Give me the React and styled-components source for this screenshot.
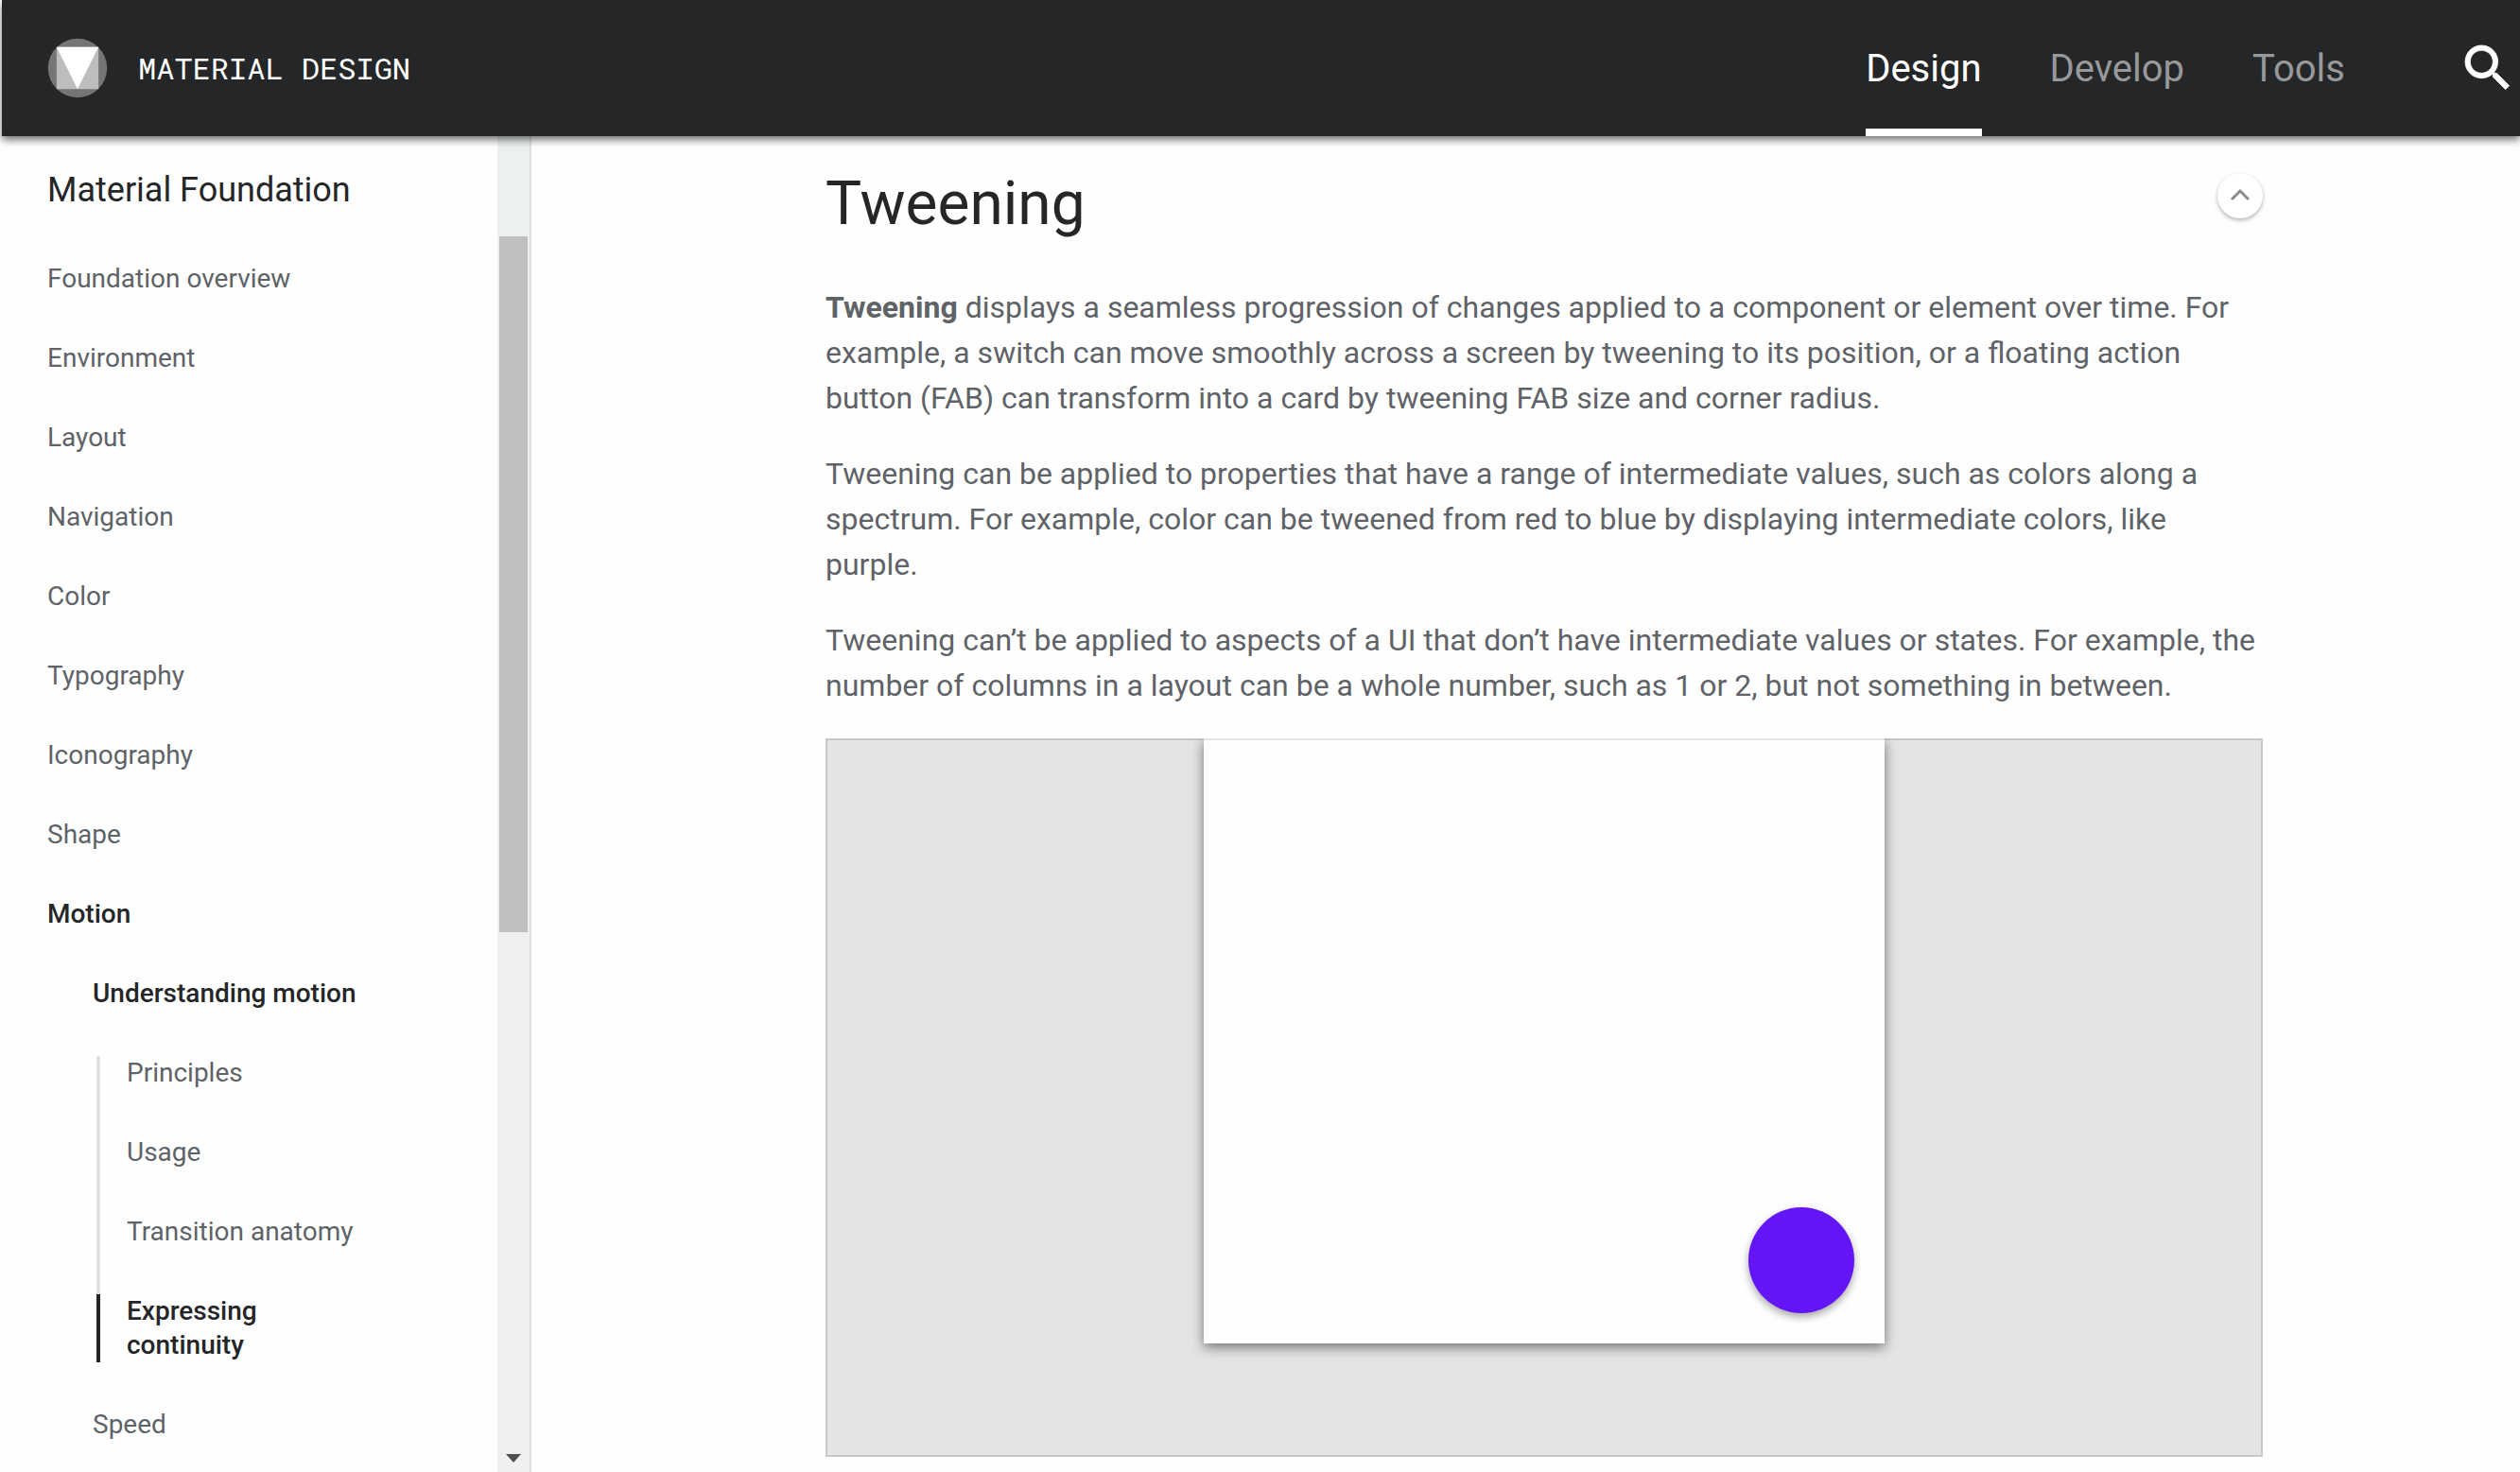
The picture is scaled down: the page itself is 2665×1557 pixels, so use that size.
import React from "react";
import styled, { createGlobalStyle } from "styled-components";

const GlobalStyle = createGlobalStyle`
  *, *::before, *::after { box-sizing: border-box; }
  body {
    margin: 0;
    background: #fefefe;
    color: #5f6368;
    font-family: Roboto, "Liberation Sans", sans-serif;
  }
  a { color: inherit; text-decoration: none; }
  ul { list-style: none; margin: 0; padding: 0; }
  p, h1, h2, figure { margin: 0; }
`;

const Page = styled.div`
  display: flex;
  flex-direction: column;
  height: 100vh;
  overflow: hidden;
`;

const Header = styled.header`
  display: flex;
  flex: none;
  align-items: stretch;
  height: 144px;
  margin-left: 2px;
  padding: 0 2px 0 48px;
  background: #242628;
  box-shadow: 0 4px 8px rgba(0, 0, 0, 0.55);
  z-index: 1;
`;

const Brand = styled.a`
  display: flex;
  align-items: center;
  gap: 32px;
  margin-right: auto;
  color: #fff;
  font: 400 32px/40px "Roboto Mono", "DejaVu Sans Mono", monospace;
`;

const Logo = styled.svg`
  width: 64px;
  height: 64px;
`;

const TopNav = styled.nav`
  display: flex;
  gap: 72px;
  margin-right: 119px;
`;

const TopLink = styled.a`
  display: flex;
  align-items: center;
  padding-top: 10px;
  border-bottom: 8px solid ${(p) => (p.$active ? "#fff" : "transparent")};
  color: ${(p) => (p.$active ? "#fff" : "#98999b")};
  font-size: 40px;
  line-height: 48px;
`;

const SearchButton = styled.button`
  align-self: center;
  width: 64px;
  height: 64px;
  padding: 0;
  border: 0;
  background: none;
  color: #fff;
  svg { display: block; width: 100%; height: 100%; }
`;

const Body = styled.div`
  display: flex;
  flex: 1;
  min-height: 0;
`;

const Sidebar = styled.aside`
  display: flex;
  flex: none;
  width: 562px;
  border-right: 2px solid #dfdfdf;
`;

const SideNav = styled.nav`
  flex: 1;
  padding: 33px 0 0 50px;
  overflow: hidden;
  font-size: 28px;
  line-height: 36px;
`;

const SideTitle = styled.h2`
  margin-bottom: 52px;
  color: #242628;
  font-size: 36px;
  font-weight: 400;
  line-height: 48px;
`;

const SideItem = styled.li`
  margin-bottom: 48px;
`;

const SideLink = styled.a`
  display: block;
  color: ${(p) => (p.$active ? "#242628" : "inherit")};
  font-weight: ${(p) => (p.$active ? 500 : 400)};
`;

const SubList = styled.ul`
  margin: 48px 0 0 48px;
`;

const LeafList = styled.ul`
  margin: 48px 0 0 4px;
`;

const LeafItem = styled.li`
  width: 280px;
  padding: 0 0 ${(p) => (p.$active ? 0 : 48)}px 28px;
  border-left: 4px solid ${(p) => (p.$active ? "#242628" : "#e2e2e2")};
`;

const ScrollTrack = styled.div`
  display: flex;
  flex-direction: column;
  align-items: center;
  width: 34px;
  padding: 106px 0 10px;
  background: linear-gradient(#ecf0f1 106px, #f0eff1 106px);
`;

const ScrollThumb = styled.div`
  flex: 0 1 736px;
  width: 30px;
  background: #c0bfc0;
`;

const ScrollArrow = styled.svg`
  width: 16px;
  height: 9px;
  margin-top: auto;
`;

const Main = styled.main`
  flex: 1;
  min-width: 0;
  padding: 32px 272px 0 311px;
`;

const TitleRow = styled.div`
  display: flex;
  justify-content: space-between;
  align-items: flex-start;
  margin-bottom: 45px;
`;

const Title = styled.h1`
  color: #242628;
  font-size: 64px;
  font-weight: 400;
  line-height: 80px;
`;

const TopButton = styled.button`
  width: 48px;
  height: 48px;
  margin-top: 7px;
  padding: 0;
  border: 0;
  border-radius: 50%;
  background: #fff;
  box-shadow: 0 2px 4px rgba(0, 0, 0, 0.3);
  color: #8c8d8e;
  svg { display: block; width: 100%; height: 100%; }
`;

const Paragraph = styled.p`
  margin-bottom: 32px;
  font-size: 32px;
  line-height: 48px;
`;

const Figure = styled.figure`
  display: flex;
  justify-content: center;
  align-items: flex-start;
  height: 760px;
  border: 2px solid #c8c8c8;
  border-top: 0;
  background: linear-gradient(#c8c8c8 2px, #e4e4e4 2px);
  overflow: hidden;
`;

const Card = styled.div`
  display: flex;
  justify-content: flex-end;
  align-items: flex-end;
  width: 720px;
  height: 640px;
  padding: 32px;
  border-top: 2px solid #e6e6e6;
  background: #fefefe;
  box-shadow: 0 4px 12px rgba(0, 0, 0, 0.5);
`;

const Fab = styled.div`
  width: 112px;
  height: 112px;
  border-radius: 50%;
  background: #6415f5;
  box-shadow: 0 4px 8px rgba(0, 0, 0, 0.35);
`;

const TOP_LINKS = ["Design", "Develop", "Tools"];
const SECTIONS = [
  "Foundation overview",
  "Environment",
  "Layout",
  "Navigation",
  "Color",
  "Typography",
  "Iconography",
  "Shape",
];
const LEAVES = [
  "Principles",
  "Usage",
  "Transition anatomy",
  <>
    Expressing
    <br />
    continuity
  </>,
];

export default function App() {
  return (
    <>
      <GlobalStyle />
      <Page>
        <Header>
          <Brand href="#">
            <Logo viewBox="0 0 24 24" aria-hidden="true">
              <circle cx="12" cy="12" r="11.7" fill="#757577" />
              <path d="M3.7 3.7h16.6v16.6H3.7z" fill="#bdbdbe" />
              <path d="M3.7 3.7h16.6L12 20.3z" fill="#fff" />
            </Logo>
            MATERIAL DESIGN
          </Brand>
          <TopNav>
            {TOP_LINKS.map((name) => (
              <TopLink key={name} href="#" $active={name === "Design"}>
                {name}
              </TopLink>
            ))}
          </TopNav>
          <SearchButton aria-label="Search">
            <svg viewBox="0 0 24 24" fill="currentColor" stroke="currentColor" strokeWidth="0.3">
              <path d="M15.5 14h-.79l-.28-.27A6.471 6.471 0 0 0 16 9.5 6.5 6.5 0 1 0 9.5 16c1.61 0 3.09-.59 4.23-1.57l.27.28v.79l5 4.99L20.49 19l-4.99-5zm-6 0C7.01 14 5 11.99 5 9.5S7.01 5 9.5 5 14 7.01 14 9.5 11.99 14 9.5 14z" />
            </svg>
          </SearchButton>
        </Header>
        <Body>
          <Sidebar>
            <SideNav>
              <SideTitle>Material Foundation</SideTitle>
              <ul>
                {SECTIONS.map((name) => (
                  <SideItem key={name}>
                    <SideLink href="#">{name}</SideLink>
                  </SideItem>
                ))}
                <SideItem>
                  <SideLink href="#" $active>Motion</SideLink>
                  <SubList>
                    <SideItem>
                      <SideLink href="#" $active>Understanding motion</SideLink>
                      <LeafList>
                        {LEAVES.map((label, i) => {
                          const active = i === LEAVES.length - 1;
                          return (
                            <LeafItem key={i} $active={active}>
                              <SideLink href="#" $active={active}>{label}</SideLink>
                            </LeafItem>
                          );
                        })}
                      </LeafList>
                    </SideItem>
                    <SideItem>
                      <SideLink href="#">Speed</SideLink>
                    </SideItem>
                  </SubList>
                </SideItem>
              </ul>
            </SideNav>
            <ScrollTrack>
              <ScrollThumb />
              <ScrollArrow viewBox="0 0 16 9" aria-hidden="true">
                <path d="M0 0h16L8 9z" fill="#505050" />
              </ScrollArrow>
            </ScrollTrack>
          </Sidebar>
          <Main>
            <TitleRow>
              <Title>Tweening</Title>
              <TopButton aria-label="Back to top">
                <svg viewBox="0 0 48 48" fill="none" stroke="currentColor" strokeWidth="3">
                  <path d="M15 28l9-9 9 9" />
                </svg>
              </TopButton>
            </TitleRow>
            <Paragraph>
              <b>Tweening</b> displays a seamless progression of changes applied to a component or
              element over time. For example, a switch can move smoothly across a screen by tweening
              to its position, or a floating action button (FAB) can transform into a card by
              tweening FAB size and corner radius.
            </Paragraph>
            <Paragraph>
              Tweening can be applied to properties that have a range of intermediate values, such
              as colors along a spectrum. For example, color can be tweened from red to blue by
              displaying intermediate colors, like purple.
            </Paragraph>
            <Paragraph>
              Tweening can’t be applied to aspects of a UI that don’t have intermediate values or
              states. For example, the number of columns in a layout can be a whole number, such as
              1 or 2, but not something in between.
            </Paragraph>
            <Figure>
              <Card>
                <Fab />
              </Card>
            </Figure>
          </Main>
        </Body>
      </Page>
    </>
  );
}
